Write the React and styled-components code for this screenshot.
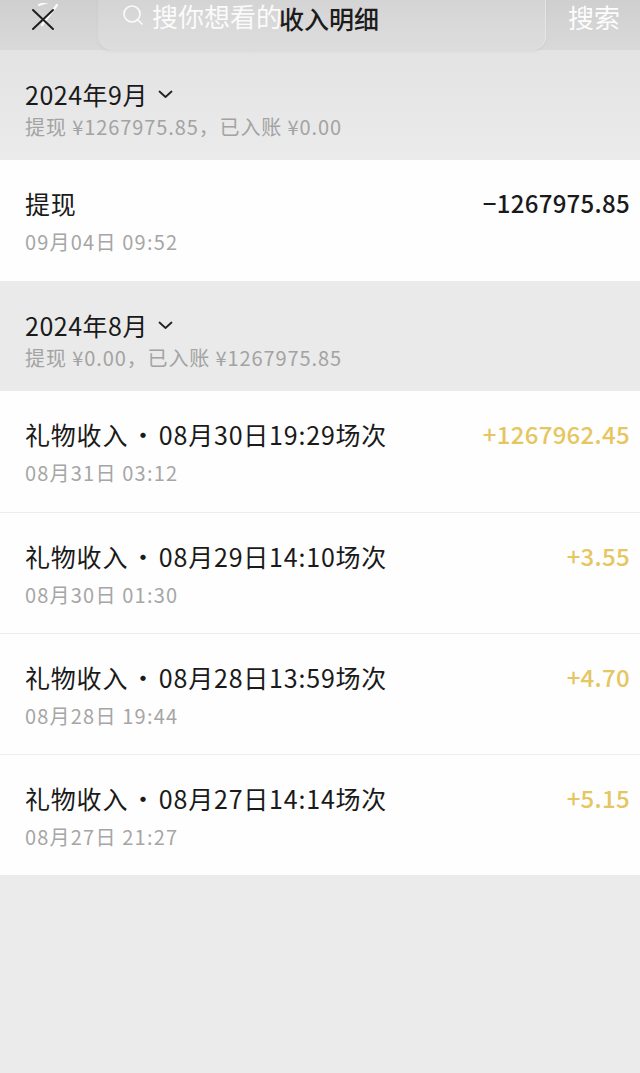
import React from "react";
import styled, { createGlobalStyle } from "styled-components";

const Global = createGlobalStyle`
  html, body { margin: 0; padding: 0; background: #ebebeb; }
  body { font-family: "Noto Sans CJK SC", "Noto Sans", sans-serif; -webkit-font-smoothing: antialiased; }
  #root { min-height: 1073px; background: #ebebeb; }
`;

const Page = styled.div`
  width: 640px;
  min-height: 1073px;
  background: #ebebeb;
  display: flex;
  flex-direction: column;
`;

const TopBar = styled.div`
  position: relative;
  height: 50px;
  display: flex;
  align-items: stretch;
  background: linear-gradient(180deg, #cfcfcf 0%, #d9d9d9 100%);
`;

const CloseBtn = styled.div`
  width: 98px;
  display: flex;
  align-items: flex-start;
  padding: 3px 0 0 30px;
  box-sizing: border-box;
`;

const SearchBox = styled.div`
  flex: 1;
  display: flex;
  align-items: flex-start;
  gap: 8px;
  padding: 14px 0 0 24px;
  margin-top: -10px;
  border-radius: 0 0 14px 14px;
  background: rgba(255, 255, 255, 0.12);
  border-right: 1px solid rgba(255, 255, 255, 0.35);
  box-shadow: 0 2px 3px rgba(0, 0, 0, 0.04);
`;

const Placeholder = styled.span`
  font-size: 26px;
  line-height: 30px;
  color: rgba(255, 255, 255, 0.92);
  white-space: nowrap;
  margin-top: -3px;
`;

const SearchAction = styled.div`
  width: 94px;
  font-size: 26px;
  line-height: 30px;
  color: rgba(255, 255, 255, 0.95);
  padding: 2px 0 0 22px;
  box-sizing: border-box;
`;

const Title = styled.div`
  position: absolute;
  left: 279px;
  top: 3px;
  font-size: 25px;
  line-height: 30px;
  color: #1c1c1c;
  font-weight: 500;
`;

const MonthSection = styled.div`
  padding: 28px 25px 21px;
  background: ${(p) => p.$bg};
`;

const MonthTitle = styled.div`
  display: flex;
  align-items: center;
  gap: 10px;
  font-size: 25px;
  line-height: 32px;
  letter-spacing: 0.5px;
  color: #1a1a1a;
`;

const MonthSub = styled.div`
  margin-top: 5px;
  font-size: 20px;
  line-height: 24px;
  letter-spacing: 0.9px;
  color: #a3a3a3;
`;

const List = styled.div`
  background: #fefefe;
  display: flex;
  flex-direction: column;
`;

const Row = styled.div`
  display: flex;
  justify-content: space-between;
  align-items: flex-start;
  padding: 28px 10px 27px 25px;
  border-top: ${(p) => (p.$first ? "none" : "1px solid #eeeeee")};
  height: ${(p) => (p.$first ? 66 : 65)}px;
`;

const RowMain = styled.div`
  display: flex;
  flex-direction: column;
`;

const RowTitle = styled.div`
  font-size: 25px;
  line-height: 30px;
  letter-spacing: 0.8px;
  word-spacing: -4px;
  color: #1a1a1a;
  white-space: nowrap;
`;

const RowDate = styled.div`
  margin-top: 12px;
  font-size: 20px;
  line-height: 24px;
  letter-spacing: 1.2px;
  color: #a6a6a6;
`;

const Amount = styled.div`
  font-size: 24px;
  line-height: 30px;
  font-weight: 500;
  letter-spacing: 0.3px;
  color: ${(p) => (p.$positive ? "#e5c660" : "#1a1a1a")};
`;

const Chevron = () => (
  <svg width="15" height="9" viewBox="0 0 15 9" fill="none">
    <path d="M1.5 1.5 L7.5 7 L13.5 1.5" stroke="#222" strokeWidth="1.8" strokeLinecap="round" strokeLinejoin="round" />
  </svg>
);

const CloseIcon = () => (
  <svg width="28" height="30" viewBox="0 0 28 30" fill="none">
    <path d="M9 2 L27 -4 M27 2 L12 22" stroke="#ffffff" strokeWidth="2.2" strokeLinecap="round" opacity="0.9" />
    <path d="M3 7 L23 26 M23 7 L3 26" stroke="#1e1e1e" strokeWidth="2" strokeLinecap="round" />
  </svg>
);

const SearchIcon = () => (
  <svg width="22" height="22" viewBox="0 0 22 22" fill="none">
    <circle cx="10" cy="10" r="8" stroke="rgba(255,255,255,0.9)" strokeWidth="1.6" />
    <path d="M16 16 L20 20" stroke="rgba(255,255,255,0.9)" strokeWidth="1.6" strokeLinecap="round" />
  </svg>
);

const months = [
  {
    title: "2024年9月",
    sub: "提现 ¥1267975.85，已入账 ¥0.00",
    bg: "linear-gradient(180deg, #e3e3e3 0%, #ebebeb 100%)",
    rows: [{ title: "提现", date: "09月04日 09:52", amount: "−1267975.85", positive: false }],
  },
  {
    title: "2024年8月",
    sub: "提现 ¥0.00，已入账 ¥1267975.85",
    bg: "#eaeaea",
    rows: [
      { title: "礼物收入 · 08月30日19:29场次", date: "08月31日 03:12", amount: "+1267962.45", positive: true },
      { title: "礼物收入 · 08月29日14:10场次", date: "08月30日 01:30", amount: "+3.55", positive: true },
      { title: "礼物收入 · 08月28日13:59场次", date: "08月28日 19:44", amount: "+4.70", positive: true },
      { title: "礼物收入 · 08月27日14:14场次", date: "08月27日 21:27", amount: "+5.15", positive: true },
    ],
  },
];

export default function App() {
  return (
    <Page>
      <Global />
      <TopBar>
        <CloseBtn>
          <CloseIcon />
        </CloseBtn>
        <SearchBox>
          <SearchIcon />
          <Placeholder>搜你想看的</Placeholder>
        </SearchBox>
        <SearchAction>搜索</SearchAction>
        <Title>收入明细</Title>
      </TopBar>
      {months.map((m) => (
        <React.Fragment key={m.title}>
          <MonthSection $bg={m.bg}>
            <MonthTitle>
              {m.title}
              <Chevron />
            </MonthTitle>
            <MonthSub>{m.sub}</MonthSub>
          </MonthSection>
          <List>
            {m.rows.map((r, i) => (
              <Row key={r.date} $first={i === 0}>
                <RowMain>
                  <RowTitle>{r.title}</RowTitle>
                  <RowDate>{r.date}</RowDate>
                </RowMain>
                <Amount $positive={r.positive}>{r.amount}</Amount>
              </Row>
            ))}
          </List>
        </React.Fragment>
      ))}
    </Page>
  );
}
